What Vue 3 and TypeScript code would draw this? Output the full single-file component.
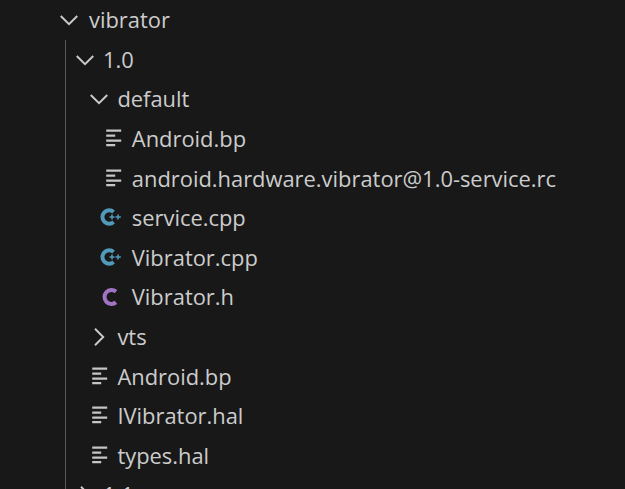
<script setup lang="ts">
type Kind = 'open' | 'closed' | 'lines' | 'cpp' | 'c'

interface Row {
  name: string
  depth: number
  kind: Kind
}

const rows: Row[] = [
  { name: '1.0', depth: 1, kind: 'open' },
  { name: 'default', depth: 2, kind: 'open' },
  { name: 'Android.bp', depth: 3, kind: 'lines' },
  { name: 'android.hardware.vibrator@1.0-service.rc', depth: 3, kind: 'lines' },
  { name: 'service.cpp', depth: 3, kind: 'cpp' },
  { name: 'Vibrator.cpp', depth: 3, kind: 'cpp' },
  { name: 'Vibrator.h', depth: 3, kind: 'c' },
  { name: 'vts', depth: 2, kind: 'closed' },
  { name: 'Android.bp', depth: 2, kind: 'lines' },
  { name: 'IVibrator.hal', depth: 2, kind: 'lines' },
  { name: 'types.hal', depth: 2, kind: 'lines' },
  { name: '1.1', depth: 1, kind: 'closed' },
]

function indent(depth: number) {
  return { paddingLeft: `${(depth - 1) * 14.4 + 7.5}px` }
}
</script>

<template>
  <div class="tree">
    <div class="row root">
      <svg class="icon" viewBox="0 0 22 22"><path d="M2.75 7 11 15.25 19.25 7" /></svg>
      <span class="label">vibrator</span>
    </div>
    <div class="children">
      <div v-for="(row, i) in rows" :key="i" class="row" :style="indent(row.depth)">
        <svg v-if="row.kind === 'open'" class="icon" viewBox="0 0 22 22">
          <path d="M2.75 7 11 15.25 19.25 7" />
        </svg>
        <svg v-else-if="row.kind === 'closed'" class="icon" viewBox="0 0 22 22">
          <path d="M7 2.75 15.25 11 7 19.25" />
        </svg>
        <svg v-else-if="row.kind === 'lines'" class="icon" viewBox="0 0 22 22">
          <path class="lines" d="M4.2 2.6H19.2M4.2 7.6H13.2M4.2 12.6H19.2M4.2 17.2H13.2" />
        </svg>
        <svg v-else-if="row.kind === 'cpp'" class="icon" viewBox="0 0 22 22">
          <path class="cpp" d="M11.6 5A6.7 6.7 0 1 0 11.6 15" />
          <path class="plus" d="M7.5 10H12.5M10 7.5V12.5M13.5 10H18.8M16.1 7.5V12.5" />
        </svg>
        <svg v-else class="icon" viewBox="0 0 22 22">
          <path class="c" d="M14 5.6A7 7 0 1 0 14 16.4" />
        </svg>
        <span class="label">{{ row.name }}</span>
      </div>
    </div>
  </div>
</template>

<style>
html,
body {
  background: #181818;
  overflow: hidden;
}
</style>

<style scoped>
.tree {
  width: 625px;
  height: 489px;
  box-sizing: border-box;
  padding-top: 0.4px;
  overflow: hidden;
  background: #181818;
  color: #cccccc;
  font-family: 'Open Sans', 'Noto Sans', sans-serif;
  font-size: 21.9px;
}

.row {
  display: flex;
  align-items: center;
  height: 39.6px;
  white-space: nowrap;
}

.root {
  padding-left: 58px;
}

.children {
  margin-left: 65px;
  border-left: 1px solid #585858;
}

.icon {
  flex: none;
  width: 22px;
  height: 22px;
  margin-right: 9px;
  overflow: visible;
  fill: none;
  stroke: #cccccc;
  stroke-width: 1.9;
}

.children .icon {
  margin-right: 7.5px;
}

.lines {
  stroke: #c5c5c5;
  stroke-width: 2.2;
}

.cpp {
  stroke: #519aba;
  stroke-width: 4;
}

.plus {
  stroke: #519aba;
  stroke-width: 1.5;
}

.c {
  stroke: #a074c4;
  stroke-width: 4;
}

.label {
  line-height: 1;
}
</style>
